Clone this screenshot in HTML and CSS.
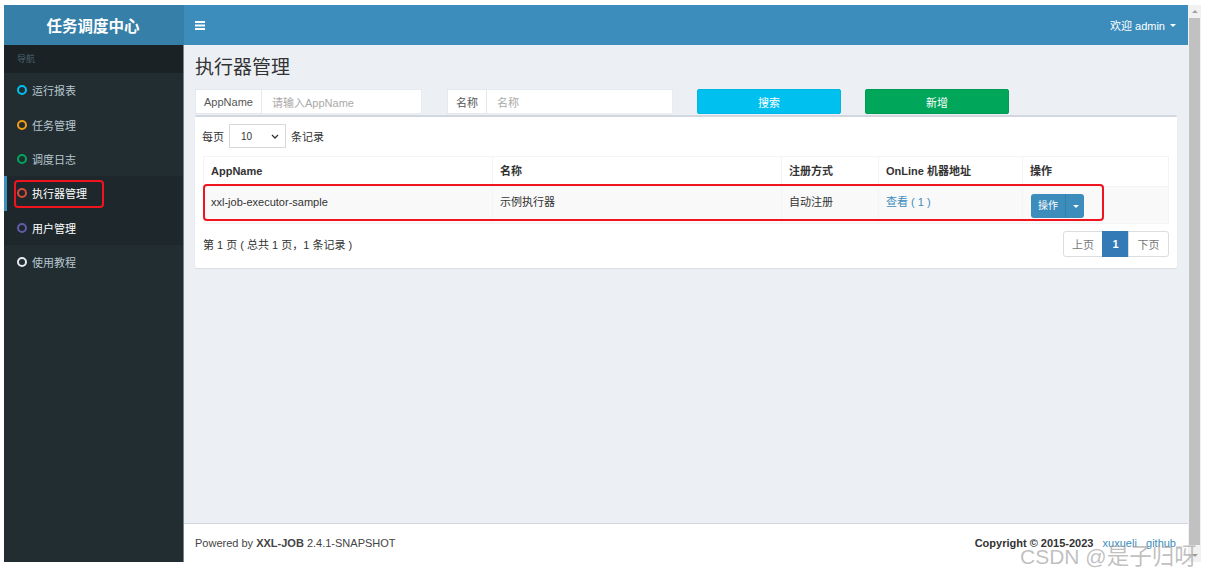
FILE: index.html
```html
<!DOCTYPE html>
<html lang="zh-CN">
<head>
<meta charset="utf-8">
<title>任务调度中心</title>
<link rel="stylesheet" href="styles.css">
</head>
<body>
<div class="screen">
  <div class="app">
    <header class="logo">任务调度中心</header>
    <nav class="navbar">
      <span class="toggle">
        <svg width="10" height="9" viewBox="0 0 10 9"><rect x="0" y="0" width="10" height="2" fill="#fff"/><rect x="0" y="3.5" width="10" height="2" fill="#fff"/><rect x="0" y="7" width="10" height="2" fill="#fff"/></svg>
      </span>
      <span class="user">欢迎 admin <i class="caret"></i></span>
    </nav>
    <aside class="sidebar">
      <div class="nav-header">导航</div>
      <ul class="menu">
        <li class="item"><i class="ring ring-aqua"></i><span>运行报表</span></li>
        <li class="item"><i class="ring ring-yellow"></i><span>任务管理</span></li>
        <li class="item"><i class="ring ring-green"></i><span>调度日志</span></li>
        <li class="item active"><i class="ring ring-red"></i><span>执行器管理</span></li>
        <li class="item hover"><i class="ring ring-purple"></i><span>用户管理</span></li>
        <li class="item"><i class="ring ring-white"></i><span>使用教程</span></li>
      </ul>
    </aside>
    <main class="content">
      <section class="content-header"><h1>执行器管理</h1></section>
      <section class="content-body">
        <div class="filters">
          <div class="input-group ig-app">
            <span class="addon">AppName</span>
            <span class="input placeholder">请输入AppName</span>
          </div>
          <div class="input-group ig-name">
            <span class="addon">名称</span>
            <span class="input placeholder">名称</span>
          </div>
          <button class="btn btn-info">搜索</button>
          <button class="btn btn-success">新增</button>
        </div>
        <div class="box">
          <div class="length">
            <span>每页</span>
            <span class="select">10
              <svg width="8" height="5" viewBox="0 0 8 5"><path d="M1 1 L4 4 L7 1" fill="none" stroke="#333" stroke-width="1.3"/></svg>
            </span>
            <span>条记录</span>
          </div>
          <table class="table">
            <colgroup>
              <col class="c1"><col class="c2"><col class="c3"><col class="c4"><col class="c5">
            </colgroup>
            <thead>
              <tr><th>AppName</th><th>名称</th><th>注册方式</th><th>OnLine 机器地址</th><th>操作</th></tr>
            </thead>
            <tbody>
              <tr>
                <td>xxl-job-executor-sample</td>
                <td>示例执行器</td>
                <td>自动注册</td>
                <td><a class="link">查看 ( 1 )</a></td>
                <td><span class="btn-group"><span class="bg-main">操作</span><span class="bg-caret"><i class="caret"></i></span></span></td>
              </tr>
            </tbody>
          </table>
          <div class="table-foot">
            <span class="info">第 1 页 ( 总共 1 页，1 条记录 )</span>
            <span class="pagination">
              <span class="page disabled">上页</span>
              <span class="page current">1</span>
              <span class="page disabled">下页</span>
            </span>
          </div>
        </div>
      </section>
      <footer class="footer">
        <span class="powered">Powered by <b>XXL-JOB</b> 2.4.1-SNAPSHOT</span>
        <span class="copy"><b>Copyright © 2015-2023</b>&nbsp;&nbsp;&nbsp;<a class="link">xuxueli</a>&nbsp;&nbsp;&nbsp;<a class="link">github</a></span>
      </footer>
    </main>
    <div class="mark mark-menu"></div>
    <div class="mark mark-row"></div>
  </div>
  <div class="scrollbar">
    <span class="sb-arrow sb-up"></span>
    <span class="sb-thumb"></span>
    <span class="sb-arrow sb-down"></span>
  </div>
  <div class="watermark">CSDN @<span class="wm-cjk">是子归呀</span></div>
</div>
</body>
</html>
```

FILE: styles.css
```css
* { box-sizing: border-box; }
html, body { margin: 0; padding: 0; background: #fff; }
body {
  font-family: "Liberation Sans", "Noto Sans CJK SC", Arial, sans-serif;
  font-size: 11px;
  color: #333;
}
.screen {
  position: relative;
  display: flex;
  width: 1208px;
  height: 574px;
  padding: 5px 7px 12px 4px;
}
.app {
  position: relative;
  width: 1184px;
  height: 557px;
  display: grid;
  grid-template-columns: 180px 1fr;
  grid-template-rows: 40px 1fr;
}
.logo {
  background: #367fa9;
  color: #fff;
  font-weight: bold;
  font-size: 15.5px;
  display: flex;
  align-items: center;
  justify-content: center;
  padding-right: 2px;
}
.navbar {
  background: #3c8dbc;
  display: flex;
  align-items: center;
  justify-content: space-between;
  padding: 0 12px 0 11px;
  color: #fff;
}
.toggle { display: flex; align-items: center; }
.user { font-size: 11px; display: flex; align-items: center; gap: 3px; }
.caret {
  display: inline-block;
  width: 0; height: 0;
  border-left: 3px solid transparent;
  border-right: 3px solid transparent;
  border-top: 3px solid #fff;
  margin-left: 2px;
}
.sidebar {
  background: #222d32;
  border-right: 1px solid #7c8387;
}
.nav-header {
  background: #1a2226;
  height: 28px;
  line-height: 28px;
  padding-left: 13px;
  font-size: 9px;
  color: #4b646f;
}
.menu { list-style: none; margin: 0; padding: 0; }
.item {
  height: 34.4px;
  display: flex;
  align-items: center;
  gap: 5px;
  padding-left: 13px;
  color: #b8c7ce;
  font-size: 11px;
}
.item.active {
  background: #1e282c;
  color: #fff;
  border-left: 3px solid #3c8dbc;
  padding-left: 10px;
}
.item.hover { background: #1e282c; color: #fff; }
.ring {
  display: inline-block;
  flex: none;
  width: 10px; height: 10px;
  border-radius: 50%;
  border: 2px solid #fff;
}
.ring-aqua { border-color: #00c0ef; }
.ring-yellow { border-color: #f39c12; }
.ring-green { border-color: #00a65a; }
.ring-red { border-color: #dd4b39; }
.ring-purple { border-color: #605ca8; }
.ring-white { border-color: #e6eaec; }

.content {
  background: #ecf0f5;
  display: flex;
  flex-direction: column;
  min-height: 0;
}
.content-header { padding: 12px 11px 0; }
.content-header h1 {
  margin: 0;
  font-size: 19px;
  line-height: 22px;
  font-weight: normal;
  color: #333;
}
.content-body { flex: 1; padding: 10px 11px 0; }
.filters {
  display: flex;
  height: 25px;
  gap: 24px;
}
.input-group { display: flex; height: 25px; background: #fff; }
.ig-app { width: 227px; margin-right: 1px; }
.ig-name { width: 226px; }
.addon {
  display: flex;
  align-items: center;
  justify-content: center;
  border: 1px solid #e5e8ec;
  color: #555;
  font-size: 11px;
}
.ig-app .addon { width: 67px; }
.ig-name .addon { width: 40px; }
.input {
  flex: 1;
  display: flex;
  align-items: center;
  padding-left: 10px;
  border: 1px solid #e8ebef;
  border-left: 0;
}
.placeholder { color: #a9a9a9; }
.btn {
  width: 144px;
  height: 25px;
  border-radius: 2px;
  border: 1px solid transparent;
  color: #fff;
  font-family: inherit;
  font-size: 11px;
  padding: 0;
}
.btn-info { background: #00c0ef; border-color: #00b6e4; }
.btn-success { background: #00a65a; border-color: #009b53; }

.box {
  margin-top: 1px;
  background: #fff;
  border-top: 2px solid #d2d6de;
  border-radius: 2px;
  box-shadow: 0 1px 1px rgba(0,0,0,0.08);
  padding: 7px 8px 11px;
}
.length {
  display: flex;
  align-items: center;
  gap: 5px;
  height: 24px;
  margin-left: -1px;
  color: #333;
}
.select {
  width: 57px;
  height: 24px;
  border: 1px solid #d8d8d8;
  display: flex;
  align-items: center;
  justify-content: space-between;
  padding: 0 6px 0 11px;
  font-size: 10px;
}
.table {
  margin-top: 8px;
  width: 965px;
  border-collapse: collapse;
  table-layout: fixed;
  border: 1px solid #f4f4f4;
}
.c1 { width: 289px; }
.c2 { width: 289px; }
.c3 { width: 97px; }
.c4 { width: 144px; }
.c5 { width: 146px; }
.table th {
  text-align: left;
  font-weight: bold;
  font-size: 11px;
  padding: 7px 7px;
  line-height: 15px;
  border: 1px solid #f4f4f4;
  border-bottom: 0;
  color: #333;
}
.table td {
  vertical-align: top;
  padding: 7px 7px 5px;
  line-height: 16px;
  border: 1px solid #f4f4f4;
  background: #f9f9f9;
  color: #333;
}
.link { color: #3c8dbc; text-decoration: none; }
.btn-group {
  display: inline-flex;
  height: 24px;
  margin-left: 1px;
  border-radius: 3px;
  overflow: hidden;
  background: #3c8dbc;
  color: #fff;
  font-size: 10px;
}
.bg-main {
  width: 35px;
  display: flex; align-items: center; justify-content: center;
  border-right: 1px solid #367fa9;
}
.bg-caret {
  width: 18px;
  display: flex; align-items: center; justify-content: center;
}
.table-foot {
  display: flex;
  justify-content: space-between;
  align-items: center;
  margin-top: 7px;
  height: 26px;
}
.info { color: #333; }
.pagination {
  display: flex;
  height: 26px;
  border-radius: 3px;
}
.page {
  display: flex;
  align-items: center;
  justify-content: center;
  border: 1px solid #ddd;
  margin-left: -1px;
  font-size: 11px;
}
.page.disabled { color: #777; background: #fff; width: 41px; }
.page:first-child { border-radius: 3px 0 0 3px; width: 40px; }
.page:last-child { border-radius: 0 3px 3px 0; }
.page.current {
  width: 27px;
  background: #337ab7;
  border-color: #337ab7;
  color: #fff;
  font-weight: bold;
}
.footer {
  height: 39px;
  background: #fff;
  border-top: 1px solid #d2d6de;
  display: flex;
  align-items: center;
  justify-content: space-between;
  padding: 0 12px 0 11px;
  color: #444;
  font-size: 11px;
}
.copy b { color: #333; }

.mark {
  position: absolute;
  border: 2px solid #f0141e;
  border-radius: 4px;
  pointer-events: none;
}
.mark-menu { left: 10px; top: 175px; width: 90px; height: 28px; }
.mark-row { left: 199px; top: 179px; width: 901px; height: 37px; }

.scrollbar {
  width: 13px;
  height: 557px;
  background: #f1f1f1;
  display: flex;
  flex-direction: column;
  align-items: center;
}
.sb-arrow { height: 13px; width: 13px; display: flex; align-items: center; justify-content: center; }
.sb-up::before {
  content: "";
  border-left: 3px solid transparent;
  border-right: 3px solid transparent;
  border-bottom: 3px solid #a3a3a3;
}
.sb-down::before {
  content: "";
  border-left: 3px solid transparent;
  border-right: 3px solid transparent;
  border-top: 3px solid #a3a3a3;
}
.sb-thumb { width: 11px; flex: 1; background: #c1c1c1; margin: 0 0 4px; }
.watermark {
  position: absolute;
  left: 1020px;
  top: 538px;
  font-size: 21px;
  color: rgba(150,150,150,0.6);
  white-space: nowrap;
  pointer-events: none;
}
.wm-cjk { font-size: 22.5px; }
```
